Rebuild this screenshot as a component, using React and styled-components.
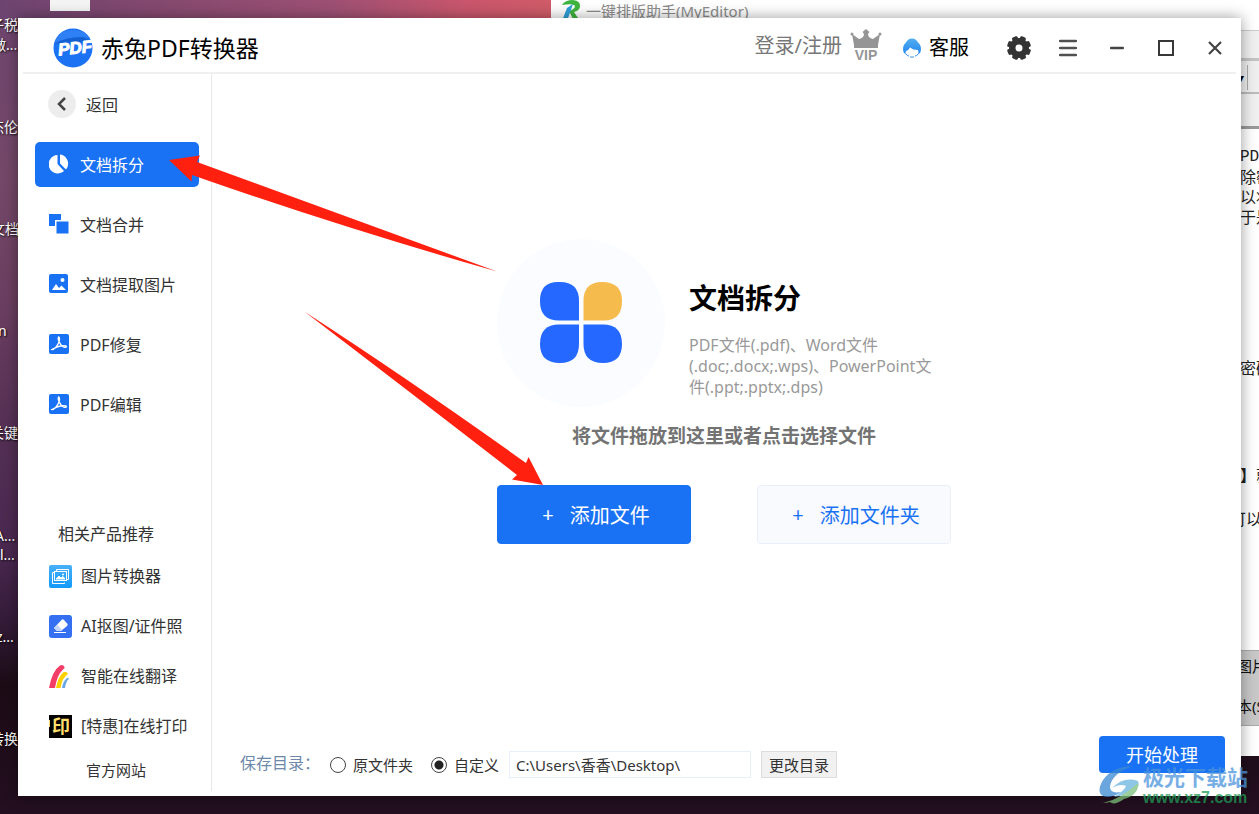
import React, { useState } from "react";
import styled, { createGlobalStyle } from "styled-components";

const GlobalStyle = createGlobalStyle`
  * {
    box-sizing: border-box;
  }

  body {
    margin: 0;
    font-family: "Noto Sans", "Noto Sans CJK SC", sans-serif;
    font-size: 16px;
    color: #333;
    overflow: hidden;
  }

  button,
  input {
    font-family: inherit;
  }
`;

// Icons
const LogoIcon = () => (
  <svg width="40" height="40" viewBox="0 0 40 40" aria-hidden="true">
    <circle cx="20" cy="20" r="19.5" fill="#1b72f2" />
    <path d="M1 16 Q14 7 37 10 L31 4 Q20 0 10 4 Q3 9 1 16Z" fill="#2f80f5" />
    <path d="M1 16 Q12 9 30 9 L37 13 L7 15Z" fill="#1560d0" />
    <text
      x="22"
      y="26"
      textAnchor="middle"
      fontFamily="Liberation Sans, sans-serif"
      fontSize="17"
      fontWeight="700"
      fontStyle="italic"
      fill="#fff"
      stroke="#fff"
      transform="rotate(-6 20 20)"
    >
      PDF
    </text>
  </svg>
);

const VipIcon = () => (
  <svg width="32" height="34" viewBox="0 0 32 34" fill="#959595" aria-hidden="true">
    <path d="M2 5 L9 10 Q14 9 14 5 L12.500 3 L16 0 L19.500 3 L18 5 Q18 9 23 10 L30 5 L28 16 H4Z" />
    <circle cx="2" cy="5" r="1.500" />
    <circle cx="30" cy="5" r="1.500" />
    <rect x="4" y="16" width="24" height="3" />
    <text
      x="16"
      y="31"
      textAnchor="middle"
      fontFamily="Liberation Sans, sans-serif"
      fontSize="14"
      fontWeight="700"
    >
      VIP
    </text>
  </svg>
);

const ServiceIcon = () => (
  <svg width="20" height="20" viewBox="0 0 20 20" aria-hidden="true">
    <defs>
      <linearGradient id="service" x1="0" y1="0" x2="0" y2="1">
        <stop offset="0" stopColor="#52aef0" />
        <stop offset="1" stopColor="#2486ee" />
      </linearGradient>
    </defs>
    <path
      d="M4 4.500 Q6 0.500 10 0.500 Q14 0.500 16 4.500 Q19 7 19 11 Q19 15 16 16.500 Q17 14 16 12 Q11 12 8 9.500 Q7 12 4 13 Q3 14.500 4 16.500 Q1 15 1 11 Q1 7 4 4.500Z"
      fill="url(#service)"
    />
    <path d="M4 16 Q5 18 7 18 M8 19 H12 M13 18 Q15 18 16 16" stroke="#3c92ee" fill="none" />
  </svg>
);

const GearIcon = () => (
  <svg width="24" height="24" viewBox="0 0 24 24" aria-hidden="true">
    <g fill="#333">
      <circle cx="12" cy="12" r="10" />
      {[22, 67, 112, 157].map((angle) => (
        <rect
          key={angle}
          x="9"
          y="0"
          width="6"
          height="24"
          rx="1.500"
          transform={`rotate(${angle} 12 12)`}
        />
      ))}
    </g>
    <circle cx="12" cy="12" r="3.500" fill="#fff" />
  </svg>
);

const MenuIcon = () => (
  <svg width="18" height="18" viewBox="0 0 18 18" aria-hidden="true">
    <path d="M1 2H17M1 9H17M1 16H17" stroke="#505050" strokeWidth="2.400" strokeLinecap="round" />
  </svg>
);

const MinimizeIcon = () => (
  <svg width="14" height="18" viewBox="0 0 14 18" aria-hidden="true">
    <path d="M1 9H13" stroke="#444" strokeWidth="2.400" strokeLinecap="round" />
  </svg>
);

const MaximizeIcon = () => (
  <svg width="16" height="16" viewBox="0 0 16 16" aria-hidden="true">
    <rect x="1" y="1" width="14" height="14" fill="none" stroke="#383838" strokeWidth="2" />
  </svg>
);

const CloseIcon = () => (
  <svg width="14" height="14" viewBox="0 0 14 14" aria-hidden="true">
    <path d="M1 1L13 13M13 1L1 13" stroke="#444" strokeWidth="2.200" />
  </svg>
);

const BackIcon = () => (
  <svg width="28" height="28" viewBox="0 0 28 28" aria-hidden="true">
    <circle cx="14" cy="14" r="14" fill="#ededed" />
    <path d="M17 8L11 14L17 20" stroke="#444" strokeWidth="2.500" fill="none" />
  </svg>
);

const SplitIcon = () => (
  <svg width="20" height="20" viewBox="0 0 20 20" fill="#fff" aria-hidden="true">
    <path d="M8.500 1 V10 L15 17 A9.200 9.200 0 1 1 8.500 1Z" />
    <path d="M11 0.500 A9.200 9.200 0 0 1 17 15.500 L11 9.500Z" />
  </svg>
);

const MergeIcon = () => (
  <svg width="20" height="20" viewBox="0 0 20 20" fill="#1972f3" aria-hidden="true">
    <path d="M0 0H12V6H6V12H0Z" />
    <rect x="7.500" y="7.500" width="12" height="12" />
  </svg>
);

const PictureIcon = () => (
  <svg width="20" height="20" viewBox="0 0 20 20" aria-hidden="true">
    <rect x="0" y="0" width="19" height="19" rx="2" fill="#1972f3" />
    <circle cx="13.500" cy="6" r="2" fill="#fff" />
    <path d="M3 16 L7 10 L10 14 L12.500 11.500 L17 16Z" fill="#fff" />
  </svg>
);

const PdfIcon = () => (
  <svg width="20" height="20" viewBox="0 0 20 20" aria-hidden="true">
    <rect width="20" height="20" rx="2" fill="#1972f3" />
    <path
      d="M9.500 3 C8 6 11 9 12 11 C14 13.500 17 14 17.500 12.500 C17 11 10 11 3 15.500 C5 16 9 11 10 8 C11 5 10.500 3 9.500 3Z"
      stroke="#fff"
      strokeWidth="1.300"
      fill="none"
    />
  </svg>
);

const ConverterIcon = () => (
  <svg width="23" height="23" viewBox="0 0 23 23" aria-hidden="true">
    <defs>
      <linearGradient id="converter" x1="0" y1="0" x2="0" y2="1">
        <stop offset="0" stopColor="#48b0fb" />
        <stop offset="1" stopColor="#149afb" />
      </linearGradient>
    </defs>
    <rect width="23" height="23" rx="2" fill="url(#converter)" />
    <g fill="none" stroke="#fff">
      <path d="M5 7.500 H3.500 V18.500 H15.500 V17.500" />
      <rect x="5.500" y="6.500" width="12" height="9" />
      <path d="M7.500 6 V4.500 H19.500 V14.500 H18" />
      <path d="M7 14 L10 11 L12 13 L14 11.500 L16 14Z" fill="#fff" />
    </g>
    <circle cx="14" cy="9.500" r="1" fill="#fff" />
  </svg>
);

const EraserIcon = () => (
  <svg width="23" height="23" viewBox="0 0 23 23" aria-hidden="true">
    <rect width="23" height="23" rx="3" fill="#3670f2" />
    <path d="M5 13 L13 4.500 Q14 4 15 5 L18.500 9 Q19 10 18 11 L12 16 H8Z" fill="#fff" />
    <path d="M5 13 L8.500 10 L13 15 L12 16 H8Z" fill="#c4d5fb" />
    <path d="M5 17.500H17" stroke="#fff" />
  </svg>
);

const TranslateIcon = () => (
  <svg width="23" height="23" viewBox="0 0 23 23" aria-hidden="true">
    <path d="M0 23 Q3 6 11 0.500 Q14 -1 15.500 2 Q16 3 14 4.500 Q8 10 6 23Z" fill="#f33e67" />
    <path d="M7 23 Q9 12 14 7.500 Q17 5.500 19 9 Q13 13 11.500 23Z" fill="#fdd000" />
    <path d="M13 23 Q14 16 18 13 Q19 12 20 14 Q17 16 16 23Z" fill="#6aa7e4" />
  </svg>
);

const PrintIcon = () => (
  <svg width="23" height="23" viewBox="0 0 23 23" aria-hidden="true">
    <rect width="23" height="23" fill="#000" />
    <path d="M0 5H1V12H0Z" fill="#ffdf6b" />
    <text
      x="12"
      y="18"
      textAnchor="middle"
      fontFamily="Noto Sans CJK SC, sans-serif"
      fontSize="18"
      fontWeight="700"
      fill="#ffdf6b"
    >
      印
    </text>
  </svg>
);

const CloverIcon = () => (
  <svg width="82" height="82" viewBox="0 0 82 82" fill="#2468ff" aria-hidden="true">
    <path d="M18 0H20Q39 0 39 19V38.500H19Q0 38.500 0 19Q0 0 18 0Z" />
    <path d="M62 0Q82 0 82 19Q82 38.500 64 38.500H43.500V19Q43.500 0 62 0Z" fill="#f5bb4d" />
    <path d="M19 42.500H39V62Q39 81 20 81Q0 81 0 62Q0 42.500 19 42.500Z" />
    <path d="M43.500 42.500H63Q82 42.500 82 62Q82 81 63 81Q43.500 81 43.500 62Z" />
  </svg>
);

const EditorIcon = () => (
  <svg width="20" height="22" viewBox="0 0 20 22" aria-hidden="true">
    <path d="M1 5 Q4 0 12 0 Q20 1 19 7 Q18 11 13 12 L19 21 H13 L8 11 Q14 9 14 6 Q12 3 1 5Z" fill="#3fb53f" />
    <path d="M6 8 L12 4 L6 21 H1Z" fill="#2f9fd8" />
  </svg>
);

const SwirlIcon = () => (
  <svg width="44" height="42" viewBox="0 0 44 42" aria-hidden="true">
    <path d="M34 1 Q14 1 4 15 Q-3 27 4 31 Q12 34 22 27 Q11 29 11 22 Q12 9 34 1Z" fill="#3988d2" />
    <path d="M13 23 Q25 11 39 16 Q42 24 32 25 Q25 31 15 32 Q26 25 27 21 Q21 18 13 23Z" fill="#69b4df" />
    <path d="M4 38 Q22 34 39 18 Q40 30 25 34 Q15 41 11 37 Q8 38 4 38Z" fill="#7cc07a" />
  </svg>
);

const navItems = [
  { label: "文档拆分", icon: SplitIcon },
  { label: "文档合并", icon: MergeIcon },
  { label: "文档提取图片", icon: PictureIcon },
  { label: "PDF修复", icon: PdfIcon },
  { label: "PDF编辑", icon: PdfIcon },
];

const products = [
  { label: "图片转换器", icon: ConverterIcon },
  { label: "AI抠图/证件照", icon: EraserIcon },
  { label: "智能在线翻译", icon: TranslateIcon },
  { label: "[特惠]在线打印", icon: PrintIcon },
];

const desktopLabels = [
  { text: "子税", x: -10, y: 15 },
  { text: "做...", x: -8, y: 35 },
  { text: "杰伦", x: -10, y: 117 },
  { text: "文档", x: -9, y: 219 },
  { text: "n", x: -2, y: 321 },
  { text: "关键", x: -10, y: 423 },
  { text: "A...", x: -5, y: 526 },
  { text: "l...", x: 0, y: 545 },
  { text: "z...", x: -4, y: 627 },
  { text: "转换", x: -10, y: 729 },
];

const App = () => {
  const [active, setActive] = useState("文档拆分");
  const [target, setTarget] = useState("custom");
  const [path, setPath] = useState("C:\\Users\\香香\\Desktop\\");

  return (
    <Desktop>
      <GlobalStyle />
      <DesktopTile />
      {desktopLabels.map((item) => (
        <DesktopLabel key={item.y} $x={item.x} $y={item.y}>
          {item.text}
        </DesktopLabel>
      ))}

      <Editor>
        <EditorTitle>
          <EditorIcon />
          一键排版助手(MyEditor)
        </EditorTitle>
        <EditorTabs />
        <EditorTools>
          <span>▾</span>
        </EditorTools>
        <EditorRuler />
        <EditorPage>
          <p>PDF</p>
          <p>除密码</p>
          <p>以将文</p>
          <p>于是可</p>
          <EditorLine $space={131}>密码</EditorLine>
          <EditorLine $space={87}>
            <b>】</b>就
          </EditorLine>
          <EditorLine $space={24} $pull>
            可以
          </EditorLine>
        </EditorPage>
        <EditorStatus>
          <p>图片</p>
          <p>本(S)</p>
        </EditorStatus>
      </Editor>

      <Window>
        <Header>
          <LogoIcon />
          <AppName>赤兔PDF转换器</AppName>
          <LoginButton type="button">
            登录/注册
            <VipIcon />
          </LoginButton>
          <ServiceButton type="button">
            <ServiceIcon />
            客服
          </ServiceButton>
          <WindowControls>
            <IconButton type="button" aria-label="设置">
              <GearIcon />
            </IconButton>
            <IconButton type="button" aria-label="菜单">
              <MenuIcon />
            </IconButton>
            <IconButton type="button" aria-label="最小化">
              <MinimizeIcon />
            </IconButton>
            <IconButton type="button" aria-label="最大化">
              <MaximizeIcon />
            </IconButton>
            <IconButton type="button" aria-label="关闭">
              <CloseIcon />
            </IconButton>
          </WindowControls>
        </Header>

        <Body>
          <Sidebar>
            <BackButton type="button">
              <BackIcon />
              返回
            </BackButton>
            <Nav>
              {navItems.map(({ label, icon: Icon }) => (
                <NavButton
                  key={label}
                  type="button"
                  $active={active === label}
                  onClick={() => setActive(label)}
                >
                  <Icon />
                  {label}
                </NavButton>
              ))}
            </Nav>
            <ProductsTitle>相关产品推荐</ProductsTitle>
            <Products>
              {products.map(({ label, icon: Icon }) => (
                <ProductLink key={label} href="#">
                  <Icon />
                  {label}
                </ProductLink>
              ))}
            </Products>
            <SiteLink href="#">官方网站</SiteLink>
          </Sidebar>

          <Main>
            <DropZone>
              <Hero>
                <HeroCircle>
                  <CloverIcon />
                </HeroCircle>
                <HeroText>
                  <h1>文档拆分</h1>
                  <p>
                    PDF文件(.pdf)、Word文件(.doc;.docx;.wps)、PowerPoint文件(.ppt;.pptx;.dps)
                  </p>
                </HeroText>
              </Hero>
              <Hint>将文件拖放到这里或者点击选择文件</Hint>
              <Actions>
                <AddButton type="button" $primary>
                  <span>+</span>添加文件
                </AddButton>
                <AddButton type="button">
                  <span>+</span>添加文件夹
                </AddButton>
              </Actions>
            </DropZone>

            <Footer>
              <SaveRow>
                <SaveLabel>保存目录：</SaveLabel>
                <RadioLabel>
                  <Radio
                    type="radio"
                    name="target"
                    checked={target === "source"}
                    onChange={() => setTarget("source")}
                  />
                  原文件夹
                </RadioLabel>
                <RadioLabel>
                  <Radio
                    type="radio"
                    name="target"
                    checked={target === "custom"}
                    onChange={() => setTarget("custom")}
                  />
                  自定义
                </RadioLabel>
                <PathInput
                  type="text"
                  aria-label="保存目录"
                  value={path}
                  onChange={(e) => setPath(e.target.value)}
                />
                <ChangeButton type="button">更改目录</ChangeButton>
              </SaveRow>
              <StartButton type="button">开始处理</StartButton>
            </Footer>
          </Main>
        </Body>
      </Window>

      <Arrows width="600" height="500" viewBox="0 0 600 500" aria-hidden="true">
        <path d="M169 160 L200 155.500 L197 162 L497 271.500 Q340 227 192 175 L191.500 181.500Z" />
        <path d="M305 312 Q410 380 526 463 L528.500 457 L543 485 L512 479.500 L517 475 Q410 392 305 312Z" />
      </Arrows>

      <Watermark>
        <SwirlIcon />
        <div>
          <strong>极光下载站</strong>
          <em>www.xz7.com</em>
        </div>
      </Watermark>
    </Desktop>
  );
};

// Styled Components
const Desktop = styled.div`
  position: relative;
  display: flex;
  min-height: 100vh;
  padding: 18px;
  overflow: hidden;
  background: linear-gradient(
      90deg,
      #6d4470 0%,
      #84496f 12%,
      #9c5074 26%,
      #c9566c 37%,
      #d05c68 44%
    )
    top / 100% 18px no-repeat,
    linear-gradient(
      180deg,
      #6f4570 0%,
      #744868 22%,
      #6a3e60 38%,
      #532f54 54%,
      #4a2850 68%,
      #351c3a 76%,
      #1c0c16 84%,
      #240f20 100%
    );
`;

const DesktopTile = styled.div`
  position: absolute;
  top: 0;
  left: 50px;
  width: 40px;
  height: 11px;
  background: #f4f4f4;
`;

const DesktopLabel = styled.span`
  position: absolute;
  top: ${(props) => props.$y}px;
  left: ${(props) => props.$x}px;
  font-size: 14px;
  line-height: 20px;
  color: #fff;
  white-space: nowrap;
  text-shadow: 1px 1px 2px #000;
`;

const Editor = styled.div`
  position: absolute;
  top: 0;
  right: 0;
  bottom: 58px;
  left: 551px;
  display: flex;
  flex-direction: column;
  background: #fff;
  overflow: hidden;
`;

const EditorTitle = styled.div`
  display: flex;
  align-items: flex-start;
  gap: 5px;
  height: 30px;
  padding-left: 10px;
  font-size: 15px;
  line-height: 22px;
  color: #8c8c8c;
`;

const EditorTabs = styled.div`
  height: 28px;
  background: #f0f0f0;
  border-top: 1px solid #ccc;
`;

const EditorTools = styled.div`
  display: flex;
  justify-content: flex-end;
  height: 36px;
  padding: 4px 11px 2px 0;
  background: #efefef;
  border-top: 3px solid #c4c4c4;
  border-bottom: 2px solid #bbb;

  span {
    padding-right: 3px;
    border-right: 1px solid #aaa;
    font-size: 12px;
    line-height: 26px;
    color: #000;
  }
`;

const EditorRuler = styled.div`
  height: 35px;
  background: #f0f0f0;
  border-bottom: 3px solid #999;
`;

const EditorPage = styled.div`
  flex: 1;
  padding: 18px 0 0 689px;
  color: #222;
  white-space: nowrap;

  p {
    margin: 0;
    font-size: 16px;
    line-height: 20px;
  }

  p:first-child {
    font-family: "Liberation Mono", monospace;
  }
`;

const EditorLine = styled.p`
  && {
    margin-top: ${(props) => props.$space}px;
    margin-left: ${(props) => (props.$pull ? -10 : 0)}px;
  }
`;

const EditorStatus = styled.div`
  height: 76px;
  margin-bottom: 30px;
  padding: 5px 0 0 686px;
  background: #c8c8c8;
  border-top: 1px solid #aaa;
  border-bottom: 1px solid #aaa;
  color: #111;
  white-space: nowrap;

  p {
    margin: 0 0 20px;
    font-size: 15px;
    line-height: 20px;
  }
`;

const Window = styled.div`
  position: relative;
  display: flex;
  flex: 1;
  flex-direction: column;
  min-width: 0;
  padding: 5px;
  background: #fff;
  box-shadow: 0 0 14px rgba(0, 0, 0, 0.4);
`;

const Header = styled.header`
  display: flex;
  align-items: center;
  height: 51px;
  padding: 0 9px 0 30px;
  border-bottom: 2px solid #f0f0f0;
`;

const AppName = styled.div`
  margin: 0 auto 0 8px;
  font-size: 23px;
  line-height: 32px;
  color: #000;
`;

const PlainButton = styled.button`
  display: flex;
  align-items: center;
  padding: 0;
  border: none;
  background: none;
  cursor: pointer;
`;

const LoginButton = styled(PlainButton)`
  gap: 8px;
  padding-bottom: 4px;
  font-size: 20px;
  line-height: 28px;
  color: #777;
`;

const ServiceButton = styled(PlainButton)`
  gap: 7px;
  margin: 0 38px 0 20px;
  font-size: 20px;
  line-height: 28px;
  color: #000;
`;

const WindowControls = styled.div`
  display: flex;
  gap: 25px;
`;

const IconButton = styled(PlainButton)`
  justify-content: center;
  width: 24px;
  height: 24px;
`;

const Body = styled.div`
  display: flex;
  flex: 1;
`;

const Sidebar = styled.aside`
  display: flex;
  flex-direction: column;
  flex: none;
  width: 189px;
  padding: 16px 12px 11px;
  border-right: 1px solid #e8e8e8;
`;

const BackButton = styled(PlainButton)`
  gap: 10px;
  height: 28px;
  margin: 0 0 24px 13px;
  font-size: 16px;
  color: #333;
`;

const Nav = styled.nav`
  display: flex;
  flex-direction: column;
  gap: 15px;
`;

const NavButton = styled(PlainButton)`
  gap: 11px;
  height: 45px;
  padding: 0 0 1px 14px;
  border-radius: 5px;
  font-size: 16px;
  color: ${(props) => (props.$active ? "#fff" : "#333")};
  background: ${(props) => (props.$active ? "#1972f3" : "transparent")};
`;

const ProductsTitle = styled.div`
  margin: auto 0 18px 23px;
  font-size: 16px;
  line-height: 24px;
`;

const Products = styled.div`
  display: flex;
  flex-direction: column;
  gap: 26px;
  margin-left: 14px;
`;

const ProductLink = styled.a`
  display: flex;
  align-items: center;
  gap: 9px;
  height: 24px;
  font-size: 16px;
  line-height: 24px;
  color: #333;
  text-decoration: none;
  white-space: nowrap;
`;

const SiteLink = styled.a`
  margin: 22px 0 0 51px;
  font-size: 15px;
  line-height: 20px;
  color: #333;
  text-decoration: none;
`;

const Main = styled.main`
  display: flex;
  flex: 1;
  flex-direction: column;
`;

const DropZone = styled.section`
  display: flex;
  flex: 1;
  flex-direction: column;
  align-items: center;
  justify-content: center;
`;

const Hero = styled.div`
  display: flex;
  align-items: flex-end;
  gap: 24px;
`;

const HeroCircle = styled.div`
  display: flex;
  align-items: center;
  justify-content: center;
  width: 168px;
  height: 168px;
  border-radius: 50%;
  background: #fafcff;
`;

const HeroText = styled.div`
  width: 262px;
  padding: 0 10px 9px 0;

  h1 {
    margin: 0 0 20px;
    font-size: 28px;
    line-height: 34px;
    color: #000;
  }

  p {
    margin: 0;
    font-size: 16px;
    line-height: 21px;
    color: #999;
  }
`;

const Hint = styled.div`
  margin: 16px 0 36px;
  font-size: 19px;
  font-weight: bold;
  line-height: 26px;
  color: #737373;
`;

const Actions = styled.div`
  display: flex;
  gap: 66px;
`;

const AddButton = styled.button`
  display: flex;
  align-items: center;
  justify-content: center;
  gap: 16px;
  width: 194px;
  height: 59px;
  padding: 0 0 0 4px;
  border: 1px solid ${(props) => (props.$primary ? "#1972f3" : "#e9f0fa")};
  border-radius: 4px;
  font-size: 20px;
  color: ${(props) => (props.$primary ? "#fff" : "#1972f3")};
  background: ${(props) => (props.$primary ? "#1972f3" : "#f8fafd")};
  cursor: pointer;
`;

const Footer = styled.footer`
  display: flex;
  align-items: flex-start;
  justify-content: space-between;
  height: 82px;
  padding: 27px 11px 0 28px;
`;

const SaveRow = styled.div`
  display: flex;
  align-items: center;
  padding-top: 15px;
  font-size: 15px;
`;

const SaveLabel = styled.span`
  width: 90px;
  padding-bottom: 4px;
  font-size: 16px;
  line-height: 22px;
  color: #6d88a8;
  white-space: nowrap;
`;

const RadioLabel = styled.label`
  display: flex;
  align-items: center;
  gap: 7px;
  margin-right: 18px;

  & + & {
    margin-right: 10px;
  }
`;

const Radio = styled.input`
  appearance: none;
  width: 16px;
  height: 16px;
  margin: 0;
  border: 1px solid #444;
  border-radius: 50%;

  &:checked {
    background: radial-gradient(circle, #222 4px, #fff 5px);
  }
`;

const PathInput = styled.input`
  width: 242px;
  height: 27px;
  padding: 0 6px;
  border: 1px solid #e6f0fa;
  font-size: 15px;
  color: #333;
`;

const ChangeButton = styled.button`
  height: 27px;
  margin-left: 10px;
  padding: 0 7px;
  border: 1px solid #ddd;
  font-size: 15px;
  color: #333;
  background: #f1f1f1;
`;

const StartButton = styled.button`
  width: 126px;
  height: 37px;
  padding: 0 0 2px;
  border: none;
  border-radius: 4px;
  font-size: 18px;
  color: #fff;
  background: #1972f3;
`;

const Arrows = styled.svg`
  position: absolute;
  top: 0;
  left: 0;
  fill: #ff2010;
  pointer-events: none;
`;

const Watermark = styled.div`
  position: absolute;
  right: 11px;
  bottom: 7px;
  display: flex;
  opacity: 0.75;
  pointer-events: none;

  strong {
    display: block;
    font-size: 21px;
    line-height: 24px;
    color: #4a93dc;
  }

  em {
    display: block;
    font-family: "Liberation Sans", sans-serif;
    font-size: 16px;
    font-style: normal;
    font-weight: bold;
    line-height: 18px;
    color: #1f9a55;
  }
`;

export default App;
